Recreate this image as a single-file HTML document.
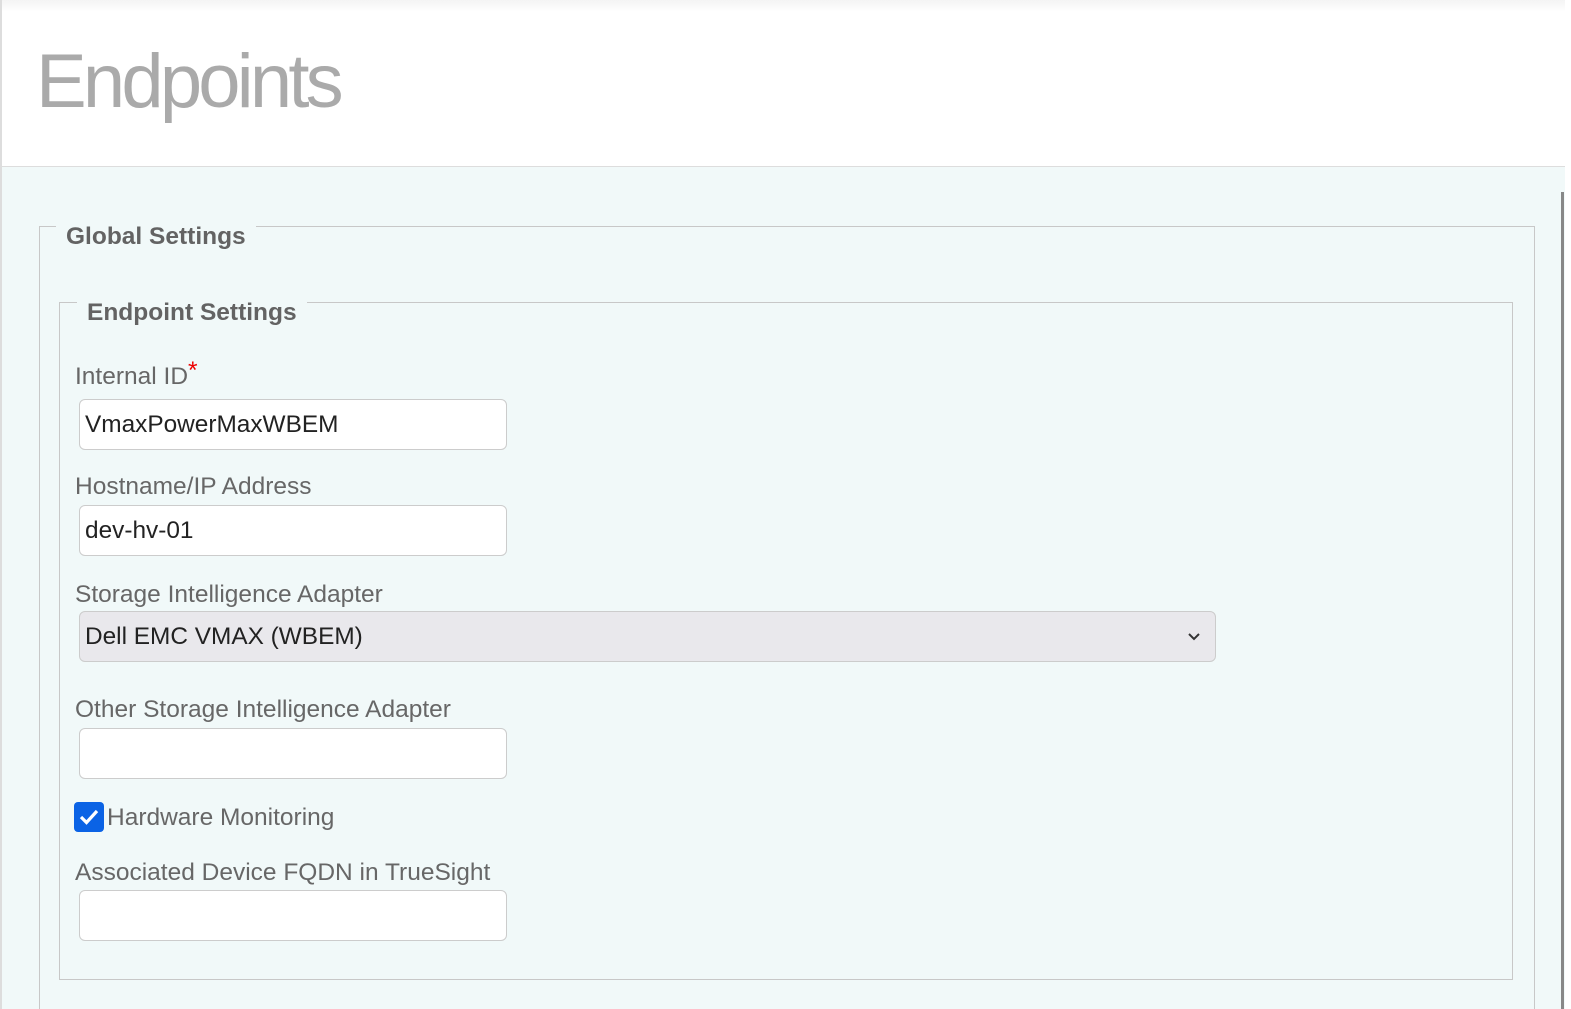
<!DOCTYPE html>
<html><head><meta charset="utf-8"><style>
*{box-sizing:border-box;margin:0;padding:0}
html,body{width:1571px;height:1009px;overflow:hidden;background:#fff;font-family:"Liberation Sans",sans-serif;position:relative}
.hdr{position:absolute;left:0;top:0;width:1565px;height:167px;background:linear-gradient(#f4f4f4 0,#fff 12px);border-left:2px solid #ddd;border-bottom:1px solid #ddd}
.title{position:absolute;left:34px;top:38px;font-size:76px;color:#aaa;letter-spacing:-3.8px;font-weight:normal}
.main{position:absolute;left:2px;top:167px;width:1563px;height:842px;background:#f1f9f9}
.left{position:absolute;left:0;top:167px;width:2px;height:842px;background:#ddd}
.sb{position:absolute;left:1561px;top:192px;width:3px;height:817px;background:#888}
.fs{position:absolute;border:1px solid #c8c8c8}
.lg{position:absolute;background:#f1f9f9;font-weight:bold;color:#636363;font-size:24.5px;padding:0 10px;line-height:28px}
.lb{position:absolute;left:75px;font-size:24.5px;color:#676767;line-height:28px}
.in{position:absolute;left:79px;width:428px;height:51px;background:#fff;border:1px solid #ccc;border-radius:6px;font-size:24.4px;color:#222;padding-left:5px;line-height:49px}
.sel{width:1137px;background:#e9e8ec}
</style></head><body>
<div class="hdr"><div class="title">Endpoints</div></div>
<div class="main"></div>
<div class="left"></div>
<div class="sb"></div>
<div class="fs" style="left:39px;top:226px;width:1496px;height:790px"></div>
<div class="lg" style="left:56px;top:223px">Global Settings</div>
<div class="fs" style="left:59px;top:302px;width:1454px;height:678px"></div>
<div class="lg" style="left:77px;top:299px">Endpoint Settings</div>
<div class="lb" style="top:363px">Internal ID<span style="color:#e00;position:relative;top:-6px">*</span></div>
<div class="in" style="top:399px">VmaxPowerMaxWBEM</div>
<div class="lb" style="top:473px">Hostname/IP Address</div>
<div class="in" style="top:505px">dev-hv-01</div>
<div class="lb" style="top:581px">Storage Intelligence Adapter</div>
<div class="in sel" style="top:611px">Dell EMC VMAX (WBEM)
<svg style="position:absolute;right:14px;top:20px" width="14" height="10" viewBox="0 0 14 10"><path d="M2 2 L7 7 L12 2" stroke="#333" stroke-width="2" fill="none"/></svg></div>
<div class="lb" style="top:696px">Other Storage Intelligence Adapter</div>
<div class="in" style="top:728px"></div>
<div style="position:absolute;left:74px;top:802px;width:30px;height:30px;background:#0b63e5;border-radius:4px">
<svg width="30" height="30" viewBox="0 0 30 30"><path d="M7 15 L12.5 20.5 L23 9" stroke="#fff" stroke-width="3.2" fill="none"/></svg></div>
<div class="lb" style="left:107px;top:804px">Hardware Monitoring</div>
<div class="lb" style="top:859px">Associated Device FQDN in TrueSight</div>
<div class="in" style="top:890px"></div>
</body></html>
